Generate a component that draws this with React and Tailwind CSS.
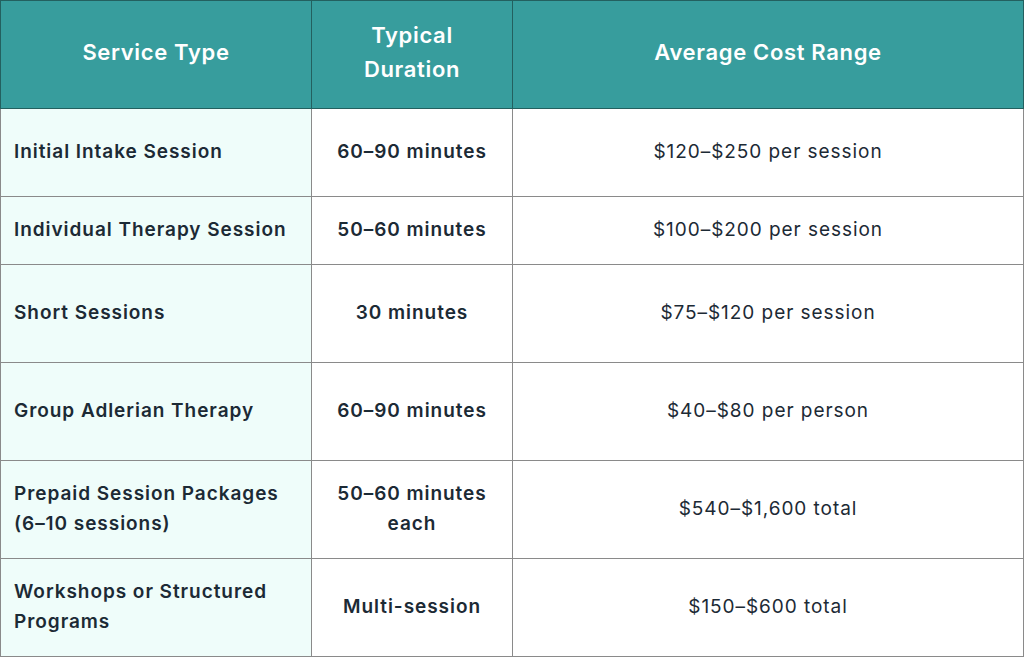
import React from "react";

const rows = [
    { service: "Initial Intake Session", duration: "60–90 minutes", cost: "$120–$250 per session", h: "h-[88px]" },
    { service: "Individual Therapy Session", duration: "50–60 minutes", cost: "$100–$200 per session", h: "h-[68px]" },
    { service: "Short Sessions", duration: "30 minutes", cost: "$75–$120 per session", h: "h-[98px]" },
    { service: "Group Adlerian Therapy", duration: "60–90 minutes", cost: "$40–$80 per person", h: "h-[98px]" },
    { service: "Prepaid Session Packages (6–10 sessions)", duration: "50–60 minutes each", cost: "$540–$1,600 total", h: "h-[98px]" },
    { service: "Workshops or Structured Programs", duration: "Multi-session", cost: "$150–$600 total", h: "h-[98px]" },
];

export default function App() {
    return (
        <div className="w-[1024px] h-[657px] bg-white font-['Inter',sans-serif] text-[#1c2a35]">
            <table className="w-full border-collapse table-fixed">
                <colgroup>
                    <col className="w-[311px]" />
                    <col className="w-[201px]" />
                    <col />
                </colgroup>
                <thead>
                    <tr className="h-[108px] bg-[#379d9d] text-white text-[22px] tracking-[0.03em] leading-[34px]">
                        <th className="border border-[#23605f] px-3 pb-[6px] font-semibold">Service Type</th>
                        <th className="border border-[#23605f] px-3 pb-[6px] font-semibold">
                            Typical
                            <br />
                            Duration
                        </th>
                        <th className="border border-[#23605f] px-3 pb-[6px] font-semibold">Average Cost Range</th>
                    </tr>
                </thead>
                <tbody>
                    {rows.map((row) => (
                        <tr key={row.service} className={`${row.h} text-[19px] tracking-[0.05em] leading-[30px]`}>
                            <td className="border border-[#8a8a8a] bg-[#effdfa] pl-[13px] pr-3 pb-[2px] font-semibold">
                                {row.service}
                            </td>
                            <td className="border border-[#8a8a8a] px-4 pb-[2px] text-center font-semibold">
                                {row.duration}
                            </td>
                            <td className="border border-[#8a8a8a] px-4 pb-[2px] text-center">
                                {row.cost}
                            </td>
                        </tr>
                    ))}
                </tbody>
            </table>
        </div>
    );
}
